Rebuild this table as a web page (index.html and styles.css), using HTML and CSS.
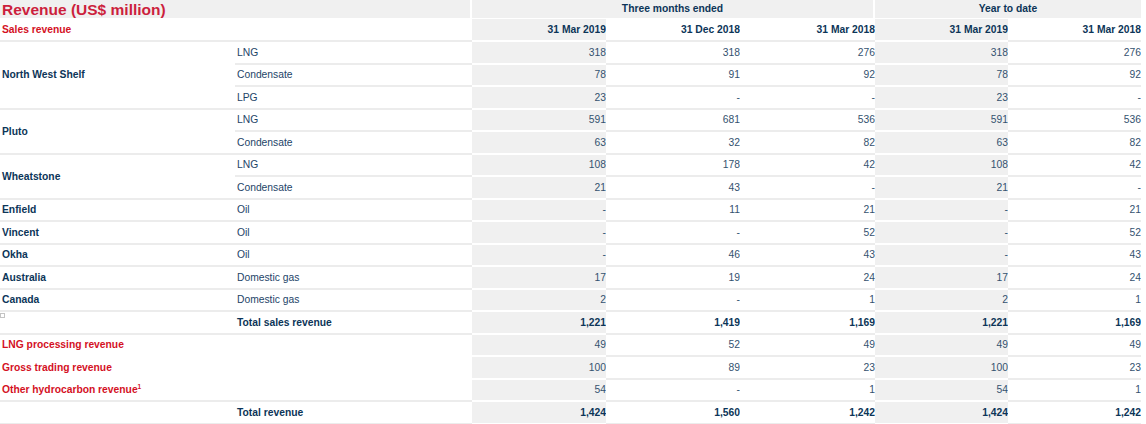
FILE: index.html
```html
<!DOCTYPE html>
<html lang="en">
<head>
<meta charset="utf-8">
<title>Revenue (US$ million)</title>
<link rel="stylesheet" href="styles.css">
</head>
<body>
<table class="rev">
  <colgroup>
    <col class="w-label"><col class="w-prod"><col class="w-num"><col class="w-num"><col class="w-num5"><col class="w-num6"><col class="w-num6">
  </colgroup>
  <thead>
    <tr class="title-row">
      <th colspan="2" class="title">Revenue (US$ million)</th>
      <th colspan="3" class="grp">Three months ended</th>
      <th colspan="2" class="grp last">Year to date</th>
    </tr>
    <tr class="head-row">
      <th colspan="2" class="sec">Sales revenue</th>
      <th class="num hl">31 Mar 2019</th>
      <th class="num">31 Dec 2018</th>
      <th class="num c5">31 Mar 2018</th>
      <th class="num hl">31 Mar 2019</th>
      <th class="num">31 Mar 2018</th>
    </tr>
  </thead>
  <tbody>
    <tr><td rowspan="3" class="asset">North West Shelf</td><td class="prod">LNG</td><td class="num hl">318</td><td class="num">318</td><td class="num c5">276</td><td class="num hl">318</td><td class="num">276</td></tr>
    <tr><td class="prod">Condensate</td><td class="num hl">78</td><td class="num">91</td><td class="num c5">92</td><td class="num hl">78</td><td class="num">92</td></tr>
    <tr><td class="prod">LPG</td><td class="num hl">23</td><td class="num">-</td><td class="num c5">-</td><td class="num hl">23</td><td class="num">-</td></tr>
    <tr><td rowspan="2" class="asset">Pluto</td><td class="prod">LNG</td><td class="num hl">591</td><td class="num">681</td><td class="num c5">536</td><td class="num hl">591</td><td class="num">536</td></tr>
    <tr><td class="prod">Condensate</td><td class="num hl">63</td><td class="num">32</td><td class="num c5">82</td><td class="num hl">63</td><td class="num">82</td></tr>
    <tr><td rowspan="2" class="asset">Wheatstone</td><td class="prod">LNG</td><td class="num hl">108</td><td class="num">178</td><td class="num c5">42</td><td class="num hl">108</td><td class="num">42</td></tr>
    <tr><td class="prod">Condensate</td><td class="num hl">21</td><td class="num">43</td><td class="num c5">-</td><td class="num hl">21</td><td class="num">-</td></tr>
    <tr><td class="asset">Enfield</td><td class="prod">Oil</td><td class="num hl">-</td><td class="num">11</td><td class="num c5">21</td><td class="num hl">-</td><td class="num">21</td></tr>
    <tr><td class="asset">Vincent</td><td class="prod">Oil</td><td class="num hl">-</td><td class="num">-</td><td class="num c5">52</td><td class="num hl">-</td><td class="num">52</td></tr>
    <tr><td class="asset">Okha</td><td class="prod">Oil</td><td class="num hl">-</td><td class="num">46</td><td class="num c5">43</td><td class="num hl">-</td><td class="num">43</td></tr>
    <tr><td class="asset">Australia</td><td class="prod">Domestic gas</td><td class="num hl">17</td><td class="num">19</td><td class="num c5">24</td><td class="num hl">17</td><td class="num">24</td></tr>
    <tr><td class="asset">Canada</td><td class="prod">Domestic gas</td><td class="num hl">2</td><td class="num">-</td><td class="num c5">1</td><td class="num hl">2</td><td class="num">1</td></tr>
    <tr class="total"><td class="marker-cell"><span class="marker"></span></td><td class="prod">Total sales revenue</td><td class="num hl">1,221</td><td class="num">1,419</td><td class="num c5">1,169</td><td class="num hl">1,221</td><td class="num">1,169</td></tr>
    <tr><td colspan="2" class="sec">LNG processing revenue</td><td class="num hl">49</td><td class="num">52</td><td class="num c5">49</td><td class="num hl">49</td><td class="num">49</td></tr>
    <tr><td colspan="2" class="sec nob">Gross trading revenue</td><td class="num hl">100</td><td class="num">89</td><td class="num c5">23</td><td class="num hl">100</td><td class="num">23</td></tr>
    <tr><td colspan="2" class="sec nob">Other hydrocarbon revenue<sup>1</sup></td><td class="num hl">54</td><td class="num">-</td><td class="num c5">1</td><td class="num hl">54</td><td class="num">1</td></tr>
    <tr class="total end"><td></td><td class="prod">Total revenue</td><td class="num hl">1,424</td><td class="num">1,560</td><td class="num c5">1,242</td><td class="num hl">1,424</td><td class="num">1,242</td></tr>
  </tbody>
</table>
</body>
</html>
```

FILE: styles.css
```css
html, body {
  margin: 0;
  padding: 0;
  background: #ffffff;
}

.rev {
  table-layout: fixed;
  width: 1141px;
  border-collapse: separate;
  border-spacing: 0;
  font-family: "Liberation Sans", Arial, sans-serif;
  font-size: 10.3px;
  color: #0c3558;
}

.w-label { width: 235px; }
.w-prod { width: 237px; }
.w-num { width: 134px; }
.w-num5 { width: 135px; }
.w-num6 { width: 133px; }

.rev th,
.rev td {
  padding: 1px 0 0 2px;
  vertical-align: middle;
  white-space: nowrap;
  overflow: hidden;
  line-height: 12px;
}

/* title row */
.title-row th {
  height: 18px;
  background: #f0f0f0;
  border-right: 2px solid #ffffff;
  padding: 0;
}
.title-row th.last { border-right: 0; }

.title {
  text-align: left;
  color: #cc1f3d;
  font-size: 15.5px;
  font-weight: bold;
}
.title-row th.title {
  padding-left: 2px;
  line-height: 17px;
  padding-top: 1px;
  height: 17px;
}

.grp {
  text-align: center;
  font-weight: bold;
}

/* header row */
.head-row th {
  border-top: 1px solid #ffffff;
  height: 20px;
  font-weight: bold;
}

/* body rows */
.rev tbody td {
  border-top: 2px solid #ececec;
  height: 19.5px;
}
.rev tbody tr.end td {
  border-bottom: 2px solid #ececec;
}

.rev .hl {
  background: #f0f0f0;
}
.rev tbody td.hl,
.rev tbody tr.end td.hl {
  border-top-color: #ffffff;
  border-bottom-color: #ffffff;
}

.num {
  text-align: right;
  color: #34526f;
}
.rev th.num,
.rev td.num {
  padding-left: 0;
  padding-right: 0;
}
.rev .c5 {
  padding-right: 2px;
}
.head-row th.num {
  color: #0c3558;
}

.asset {
  text-align: left;
  font-weight: bold;
  color: #0c3558;
}

.prod {
  text-align: left;
  color: #1d4468;
}

.sec {
  text-align: left;
  font-weight: bold;
  color: #d4111f;
}
.rev tbody td.nob {
  border-top-color: #ffffff;
}

.sec sup {
  font-size: 6.5px;
  line-height: 0;
  vertical-align: 4px;
}

.total td {
  font-weight: bold;
}
.total td.num {
  color: #0c3558;
}
.total td.prod {
  color: #0c3558;
}

.rev td.marker-cell {
  vertical-align: top;
  padding: 0;
}
.marker {
  display: block;
  width: 3px;
  height: 3px;
  margin-top: 1px;
  border: 1px solid #c4c4c4;
}
```
